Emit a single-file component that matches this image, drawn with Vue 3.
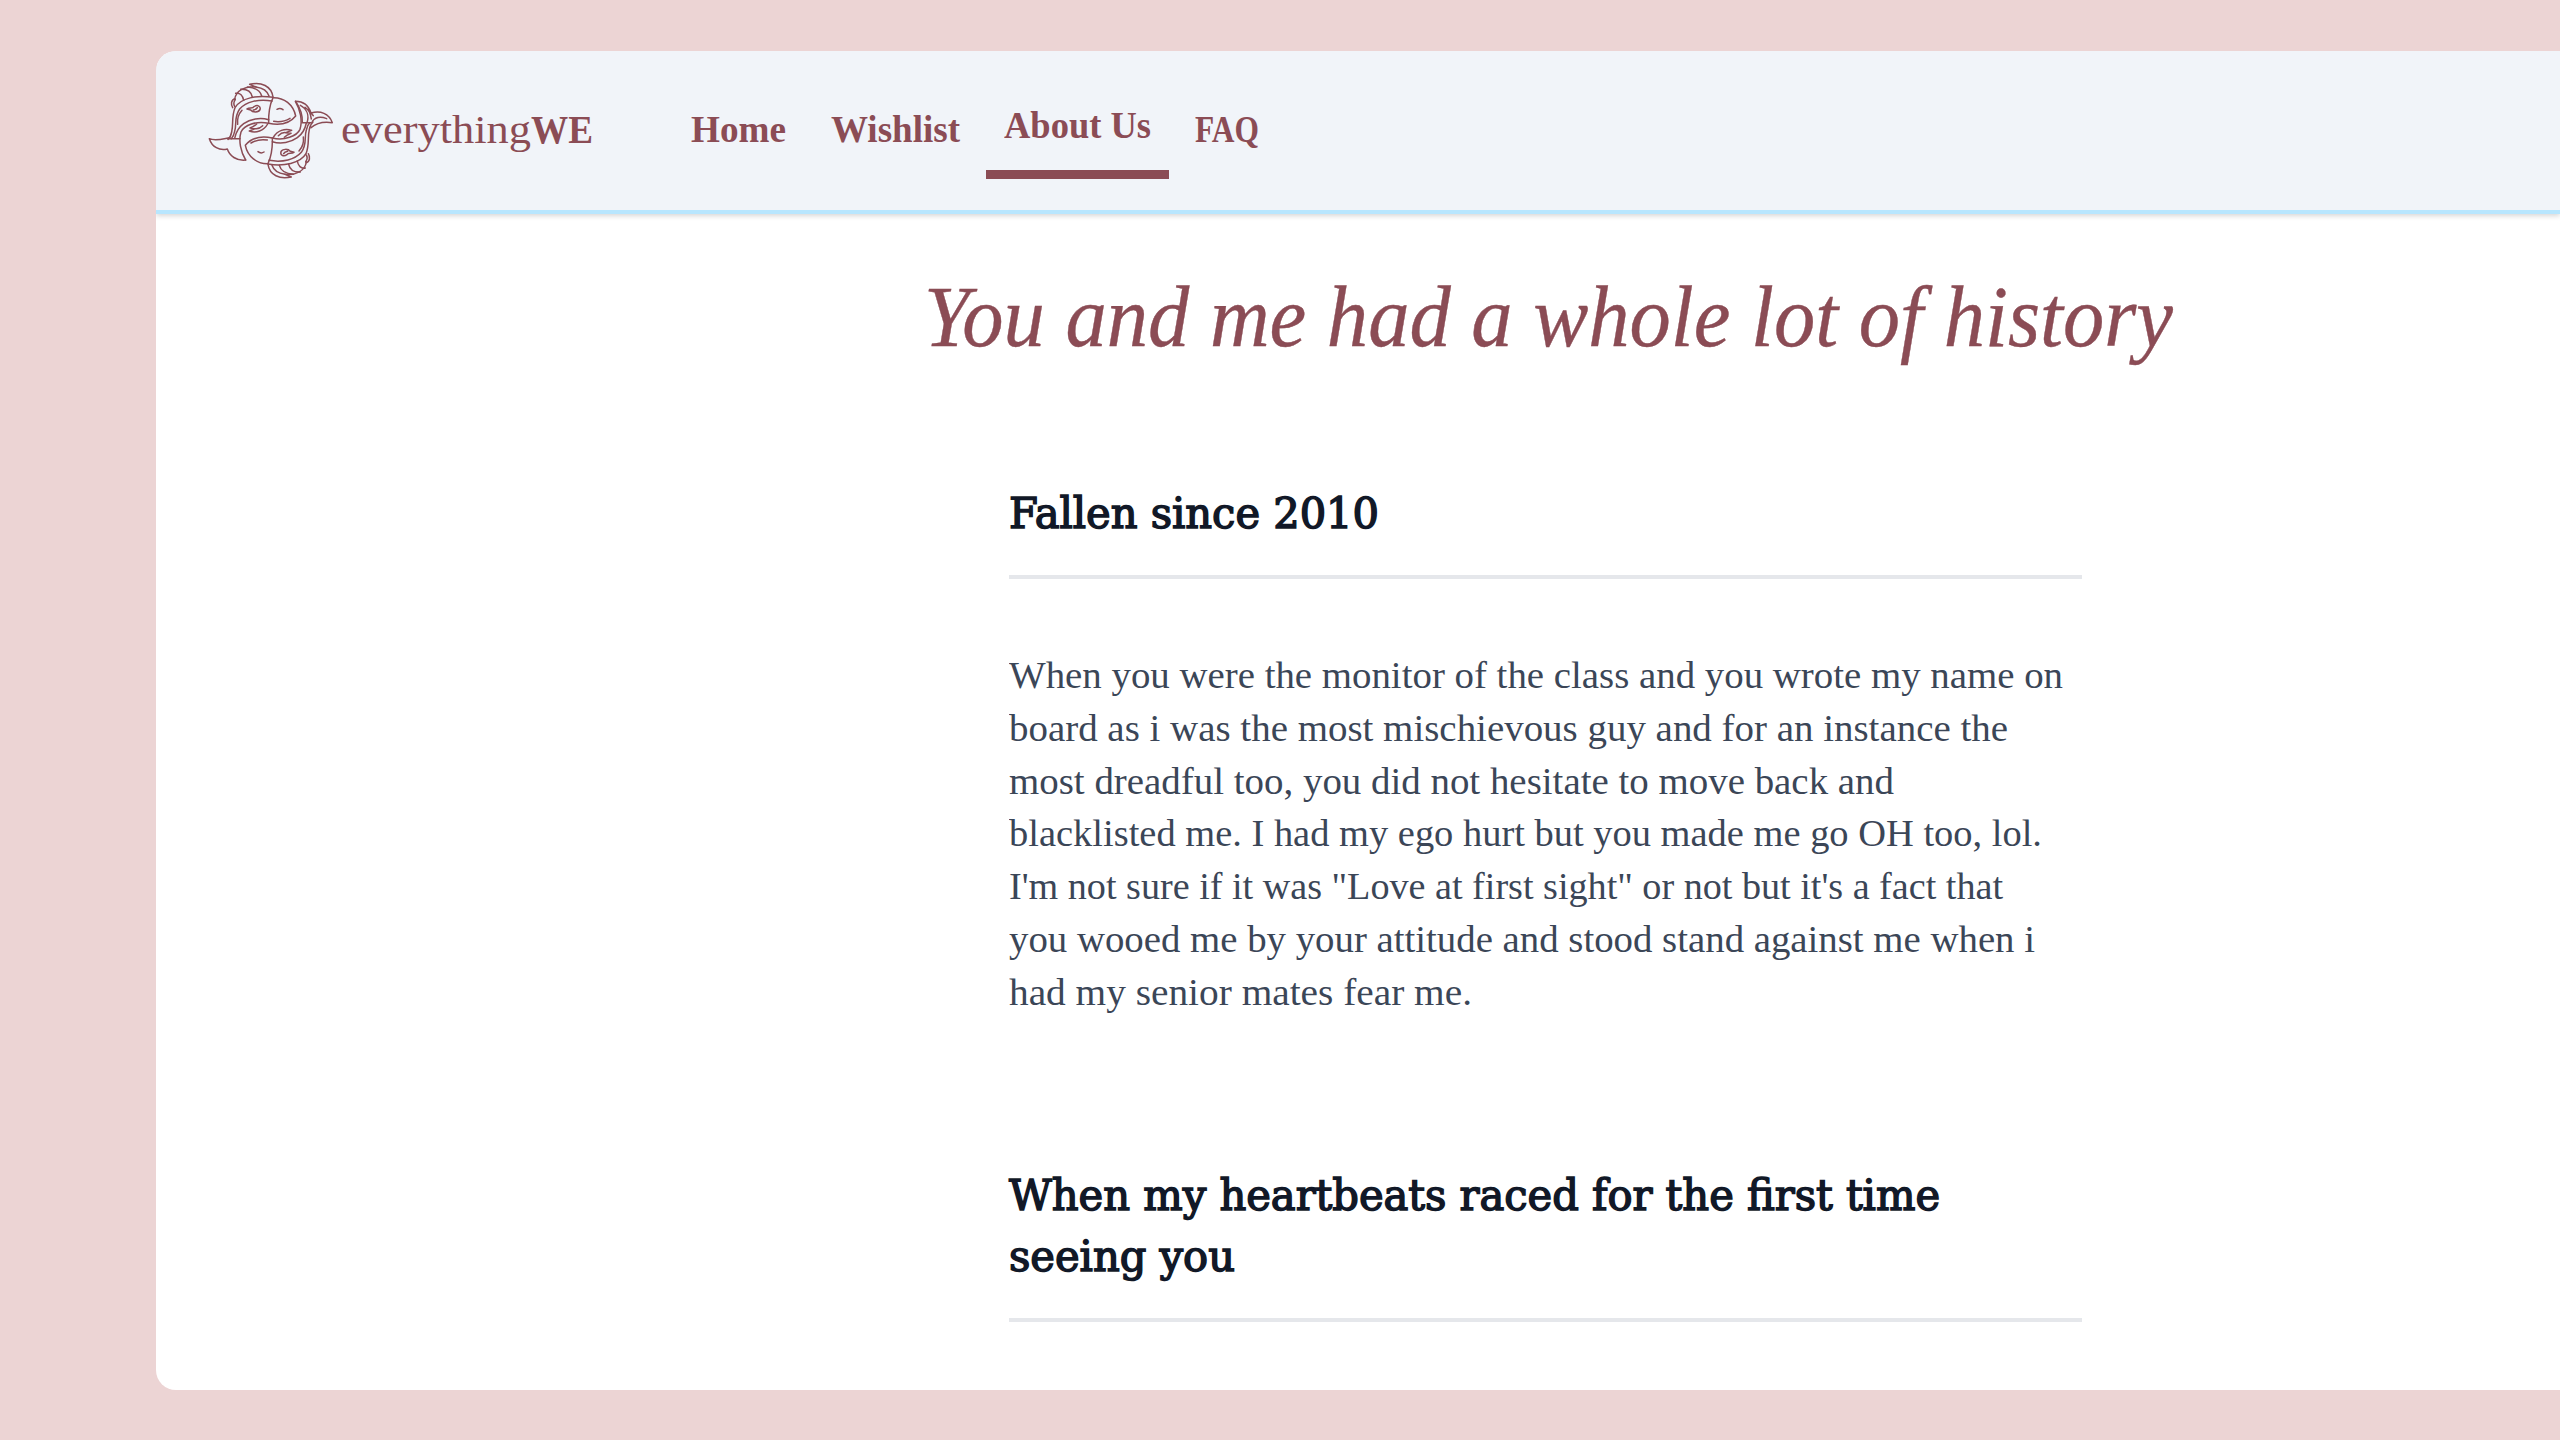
<script setup>
const links = [
  { label: 'Home', width: 95 },
  { label: 'Wishlist', width: 129 },
  { label: 'About Us', width: 147, active: true },
  { label: 'FAQ', width: 64 },
]

const story = [
  { text: 'When you were the monitor of the class and you wrote my name on', width: 1054 },
  { text: 'board as i was the most mischievous guy and for an instance the', width: 999 },
  { text: 'most dreadful too, you did not hesitate to move back and', width: 885 },
  { text: "blacklisted me. I had my ego hurt but you made me go OH too, lol.", width: 1033 },
  { text: 'I\'m not sure if it was "Love at first sight" or not but it\'s a fact that', width: 994 },
  { text: 'you wooed me by your attitude and stood stand against me when i', width: 1026 },
  { text: 'had my senior mates fear me.', width: 463 },
]

// Stretches or condenses a line of type to its measure.
const vFit = {
  mounted(el, { value }) {
    const natural = el.getBoundingClientRect().width
    el.style.width = value + 'px'
    el.style.transform = `scaleX(${value / natural})`
  },
}
</script>

<template>
  <div class="page">
    <div class="card">
      <header class="bar">
        <div class="brand">
          <svg class="logo" viewBox="0 0 420 360" width="140" height="120">
            <defs>
              <g id="fish">
                <path d="M219 83C252 82 280 104 287 138C268 162 236 166 206 160C205 130 209 105 219 83Z" />
                <path d="M221 154C240 157 257 153 270 145M231 118q9-6 18 1" />
                <path d="M219 82C172 74 122 84 105 113C94 140 101 160 95 186C93 197 90 203 84 208" />
                <path d="M216 93C175 86 138 95 119 117C101 142 111 162 104 184C102 194 99 201 94 206" />
                <path d="M126 121C115 133 111 148 113 163" />
                <path d="M206 149C180 141 150 147 131 161C113 174 107 190 104 205" />
                <path d="M206 160C170 151 132 166 123 186C115 212 122 245 137 270" />
                <path d="M148 183C168 190 191 183 203 162M148 183l18-7-16-2c8-3 14-6 20-12M166 176c9 1 16-3 22-9" />
                <path d="M104 88C108 62 135 47 168 51L149 43C184 35 214 48 219 81" />
                <path d="M107 70C120 67 129 77 131 91M122 58C142 57 154 67 157 81M143 51C166 53 181 63 185 78M168 51C190 54 202 63 207 78" />
                <path d="M105 86C93 89 92 103 98 113M106 89c-6 8-5 15-2 20" />
                <path d="M141 117C150 112 158 117 162 110C173 103 183 109 180 119C176 128 158 128 152 120ZM160 120c6-1 10-3 12-7" />
              </g>
            </defs>
            <use href="#fish" />
            <use href="#fish" transform="rotate(180 211.500 182)" />
            <path d="M28 206C46 214 67 207 90 203M28 206C36 231 58 243 82 237C89 258 109 273 137 270M84 206H120" />
            <path d="M287 94C311 94 326 108 333 129C361 121 387 130 397 158C370 154 350 158 333 173M287 94C301 114 308 135 307 158M301 106C321 117 328 137 321 158M315 112C328 120 331 130 334 147M333 129L340 137M337 154C346 142 362 139 380 146M306 158H334" />
          </svg>
          <span class="name"><span v-fit="190">everything</span><b v-fit="62">WE</b></span>
        </div>
        <nav class="nav">
          <a v-for="l in links" :key="l.label" class="link" :class="{ active: l.active }">
            <span v-fit="l.width">{{ l.label }}</span>
          </a>
        </nav>
      </header>

      <main class="content">
        <h1 class="title"><span v-fit="1249">You and me had a whole lot of history</span></h1>
        <section class="entry">
          <h2><span v-fit="370" class="line">Fallen since 2010</span></h2>
          <p>
            <span v-for="(line, i) in story" :key="i" v-fit="line.width" class="line">{{ line.text }}</span>
          </p>
        </section>
        <section class="entry">
          <h2>
            <span v-fit="931" class="line">When my heartbeats raced for the first time</span>
            <span v-fit="226" class="line">seeing you</span>
          </h2>
        </section>
      </main>
    </div>
  </div>
</template>

<style>
body {
  margin: 0;
  overflow: hidden;
}
</style>

<style scoped>
.page {
  box-sizing: border-box;
  width: 2560px;
  height: 1440px;
  padding: 51px 0 50px 156px;
  background: #ecd4d4;
  font-family: "Liberation Serif", serif;
  overflow: hidden;
  white-space: nowrap;
}
.card {
  height: 1339px;
  border-radius: 20px 0 0 20px;
  background: #fff;
  overflow: hidden;
}
.bar {
  box-sizing: border-box;
  display: flex;
  height: 163px;
  padding-left: 44px;
  border-bottom: 4px solid #b8e6fe;
  background: #f1f4f9;
  box-shadow: 0 2px 5px rgba(0, 0, 0, 0.16);
  color: #8b4c55;
}
.brand {
  display: flex;
  width: 475px;
}
.logo {
  margin-top: 19px;
  fill: none;
  stroke: #8b4c55;
  stroke-width: 4.500;
  stroke-linecap: round;
  stroke-linejoin: round;
}
.name {
  margin: 55px 0 0 1px;
  font-size: 40px;
  line-height: 48px;
}
.name span,
.name b,
.link span,
.title span {
  display: inline-block;
  transform-origin: 0 50%;
}
.nav {
  display: flex;
}
.link {
  box-sizing: border-box;
  height: 78px;
  margin-top: 55px;
  padding: 0 16px 0 16px;
  font-size: 37px;
  font-weight: 700;
  line-height: 48px;
}
.link + .link {
  margin-left: 13px;
}
.link.active {
  height: 78px;
  margin: 50px -3px 0 10px;
  padding: 0 18px;
  border-bottom: 9px solid #8b4c55;
}
.active span {
  position: relative;
  top: 1px;
}
.content {
  width: 1073px;
  margin-left: 853px;
}
.title {
  margin: 48px 0 0 -85px;
  font-size: 87px;
  font-style: italic;
  font-weight: 400;
  line-height: 110px;
  color: #8b4c55;
  -webkit-text-stroke: 0.400px #8b4c55;
}
.line {
  display: block;
  width: max-content;
  transform-origin: 0 50%;
}
h2 {
  margin: 111px 0 0;
  padding-bottom: 30.500px;
  border-bottom: 4px solid #e5e7eb;
  font-family: "DejaVu Serif Condensed", "DejaVu Serif", serif;
  font-stretch: condensed;
  font-size: 42px;
  font-weight: 400;
  line-height: 61.500px;
  color: #111827;
  -webkit-text-stroke: 1.400px #111827;
}
.entry + .entry h2 {
  margin-top: 145px;
}
p {
  margin: 71px 0 0;
  font-size: 37.500px;
  line-height: 52.800px;
  color: #3b4657;
}
</style>
